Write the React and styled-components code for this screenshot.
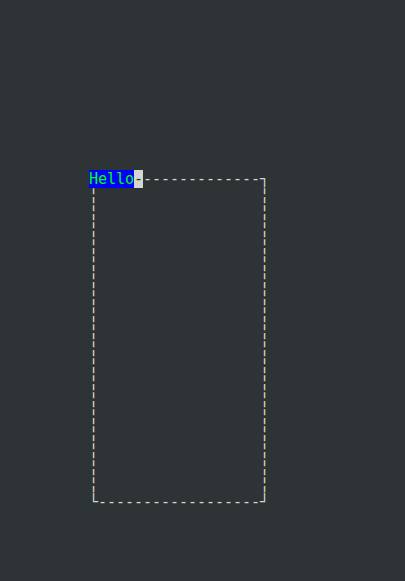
import React from "react";
import styled, { createGlobalStyle } from "styled-components";

const GlobalStyle = createGlobalStyle`
  html, body {
    margin: 0;
    padding: 0;
    background: #2e3436;
  }
`;

const COLS = 20;
const ROWS = 20;
const TOP = 10;
const LEFT = 9;

const App = () => {
  const inner = COLS - 2;

  const lines = [];
  for (let r = 0; r < 34; r++) {
    const boxRow = r - TOP;
    const pad = " ".repeat(LEFT);

    if (boxRow === 0) {
      lines.push(
        <Line key={r}>
          {pad}
          <Label>Hello</Label>
          <Cursor>-</Cursor>
          <Border>{"-".repeat(inner - 5)}┐</Border>
        </Line>
      );
    } else if (boxRow > 0 && boxRow < ROWS - 1) {
      lines.push(
        <Line key={r}>
          {pad}
          <VDash>╎</VDash>
          {" ".repeat(inner)}
          <VDash>╎</VDash>
        </Line>
      );
    } else if (boxRow === ROWS - 1) {
      lines.push(
        <Line key={r}>
          {pad}
          <Border>└{"-".repeat(inner)}┘</Border>
        </Line>
      );
    } else {
      lines.push(<Line key={r}> </Line>);
    }
  }

  return (
    <>
      <GlobalStyle />
      <Screen>{lines}</Screen>
    </>
  );
};

export default App;

const Screen = styled.pre`
  margin: 0;
  padding: 1px 8px 0;
  min-height: 100vh;
  box-sizing: border-box;
  background: #2e3436;
  color: #d3d7cf;
  font-family: "DejaVu Sans Mono", monospace;
  font-size: 15px;
  line-height: 17px;
  letter-spacing: -0.03px;
`;

const Line = styled.div`
  height: 17px;
  white-space: pre;
`;

const Label = styled.span`
  background: #0000ff;
  color: #00ff00;
`;

const Cursor = styled.span`
  background: #d3d7cf;
  color: #2e3436;
`;

const Border = styled.span`
  color: #d3d7cf;
`;

const VDash = styled.span`
  color: #e2ddc6;
`;
